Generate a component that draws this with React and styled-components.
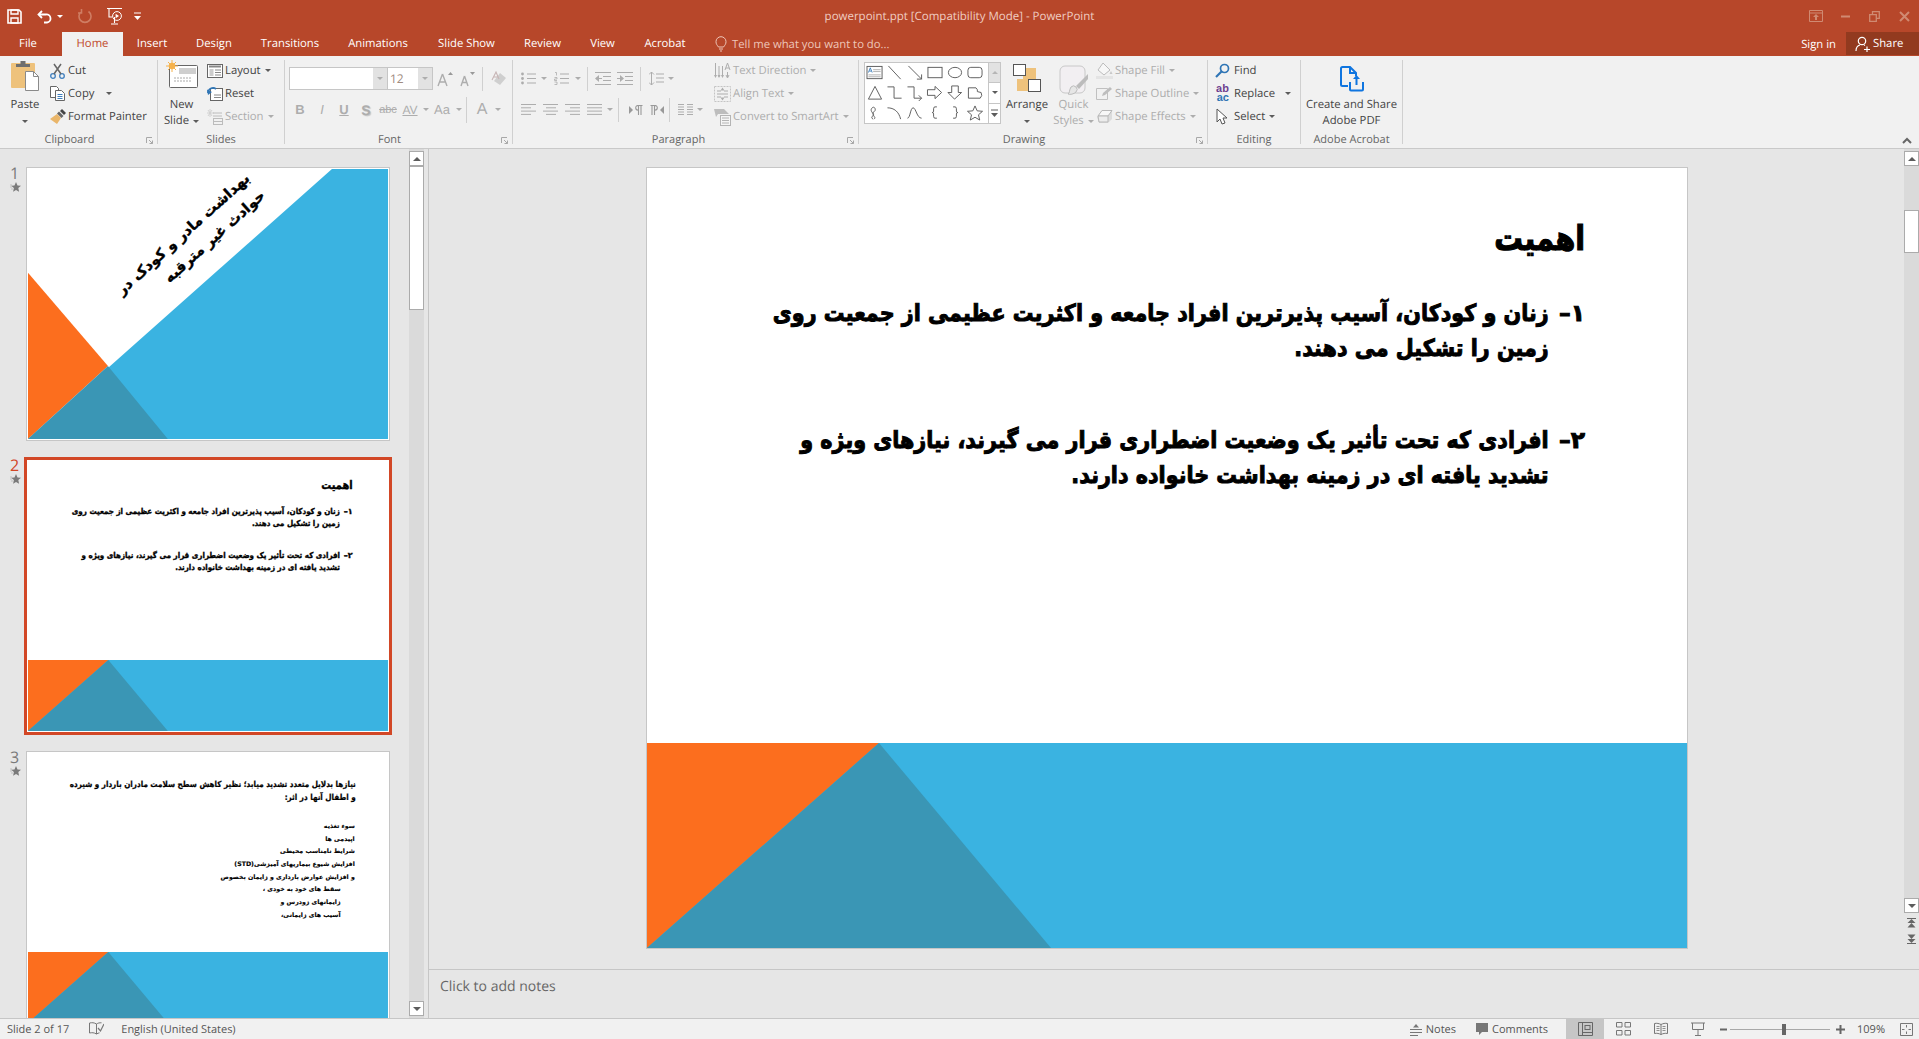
import React from "react";
import styled, { createGlobalStyle } from "styled-components";

const UI_FONT = `"Open Sans", "Noto Sans", sans-serif`;
const SLIDE_FONT = `"DejaVu Sans", "Noto Sans", sans-serif`;
const DIM = "#adadad";
const INK = "#5c5c5c";

const GlobalStyle = createGlobalStyle`
  html, body { margin: 0; padding: 0; background: #e6e6e6; }
  body { font-family: ${UI_FONT}; font-size: 11.3px; color: #444; text-rendering: geometricPrecision; }
  * { box-sizing: border-box; }
`;

const Page = styled.div`
  height: 100vh;
  display: flex;
  flex-direction: column;
  overflow: hidden;
`;

/* ---------- title bar ---------- */
const TitleBar = styled.div`
  height: 32px;
  flex: none;
  background: #b7472a;
  display: grid;
  grid-template-columns: 1fr auto 1fr;
  align-items: center;
`;
const QuickAccess = styled.div`
  display: flex;
  align-items: center;
  padding-left: 5px;
`;
const DocTitle = styled.div`
  color: #f0cdc2;
  font-size: 11.5px;
`;
const WindowButtons = styled.div`
  display: flex;
  justify-content: flex-end;
  align-items: center;
`;
const WinButton = styled.span`
  width: 29.5px;
  display: flex;
  justify-content: center;
`;
const Slot = styled.span`
  width: ${(p) => p.$w}px;
  height: 23px;
  flex: none;
  display: flex;
  align-items: center;
  justify-content: center;
`;
const Glyph = styled.svg`
  display: block;
  flex: none;
`;
const Caret = styled.span`
  display: inline-block;
  flex: none;
  width: 0;
  height: 0;
  border-left: 3px solid transparent;
  border-right: 3px solid transparent;
  border-top: 3px solid ${(p) => p.$color || INK};
  margin-left: ${(p) => p.$ml || 0}px;
`;

/* ---------- tabs ---------- */
const TabRow = styled.div`
  height: 24px;
  flex: none;
  background: #b7472a;
  display: flex;
  align-items: stretch;
`;
const Tab = styled.div`
  width: ${(p) => p.$w}px;
  padding-right: ${(p) => p.$pr || 0}px;
  padding-bottom: 1px;
  display: flex;
  align-items: center;
  justify-content: center;
  color: ${(p) => (p.$active ? "#c0482a" : "#fff")};
  background: ${(p) => (p.$active ? "#f1f1f1" : "transparent")};
`;
const TellMe = styled.div`
  margin-left: 15px;
  display: flex;
  align-items: center;
  gap: 5px;
  color: #eec6b9;
`;
const TabEnd = styled.div`
  margin-left: auto;
  display: flex;
  align-items: stretch;
`;
const SignIn = styled.div`
  display: flex;
  align-items: center;
  color: #fff;
  padding-right: 10px;
`;
const Share = styled.div`
  width: 73px;
  margin-bottom: 1px;
  background: #923a1f;
  color: #fff;
  display: flex;
  align-items: center;
  gap: 3px;
  padding-left: 9px;
`;

/* ---------- ribbon ---------- */
const Ribbon = styled.div`
  height: 93px;
  flex: none;
  position: relative;
  background: #f1f1f1;
  border-bottom: 1px solid #c9c9c9;
  padding-top: 4px;
  display: flex;
  align-items: flex-start;
`;
const Group = styled.div`
  width: ${(p) => p.$w}px;
  height: 84px;
  flex: none;
  border-right: 1px solid #d0d0d0;
  display: flex;
  flex-direction: column;
  position: relative;
`;
const GroupBody = styled.div`
  height: 72px;
  display: flex;
  align-items: flex-start;
  padding-left: ${(p) => p.$pl || 0}px;
`;
const GroupLabel = styled.div`
  height: 12px;
  line-height: 16px;
  text-align: center;
  color: #666;
  font-size: 11px;
  padding-right: ${(p) => p.$pr || 0}px;
`;
const Launcher = styled.span`
  position: absolute;
  right: 4px;
  bottom: 0;
`;
const Collapse = styled.span`
  position: absolute;
  right: 7px;
  bottom: 4px;
`;
const BigButton = styled.div`
  width: ${(p) => p.$w}px;
  flex: none;
  display: flex;
  flex-direction: column;
  align-items: center;
  color: ${(p) => (p.$dim ? DIM : "#444")};
`;
const BigIcon = styled.div`
  height: 37px;
  padding-top: ${(p) => p.$top || 0}px;
  display: flex;
  align-items: flex-start;
  justify-content: center;
`;
const BigText = styled.div`
  height: 16px;
  line-height: 16px;
  white-space: nowrap;
  display: flex;
  align-items: center;
  gap: 4px;
`;
const SmallColumn = styled.div`
  display: flex;
  flex-direction: column;
  margin-top: -1px;
  margin-left: ${(p) => p.$ml || 0}px;
`;
const SmallButton = styled.div`
  height: 23px;
  display: flex;
  align-items: center;
  white-space: nowrap;
  color: ${(p) => (p.$dim ? DIM : "#444")};
`;
const SmallIcon = styled.span`
  width: ${(p) => p.$w}px;
  flex: none;
  margin-right: ${(p) => p.$gap ?? 3}px;
  display: flex;
  justify-content: center;
`;
const ToolColumn = styled.div`
  padding-top: 7px;
  width: ${(p) => (p.$w ? `${p.$w}px` : "auto")};
  flex: none;
  display: flex;
  flex-direction: column;
  gap: 8px;
`;
const ToolRow = styled.div`
  height: 23px;
  display: flex;
  align-items: center;
`;
const ComboBox = styled.div`
  width: ${(p) => p.$w}px;
  height: 23px;
  border: 1px solid #c6c6c6;
  margin-left: ${(p) => p.$ml || 0}px;
  background: #fff;
  display: flex;
  font-size: 12px;
  color: #a08b80;
`;
const ComboValue = styled.div`
  flex: 1;
  line-height: 21px;
  padding-left: 2px;
`;
const ComboArrow = styled.div`
  width: 14px;
  background: #e2e2e2;
  display: flex;
  align-items: center;
  justify-content: center;
`;
const VRule = styled.span`
  width: 1px;
  height: ${(p) => p.$h || 23}px;
  flex: none;
  background: #d0d0d0;
  margin: 0 ${(p) => p.$m || 4}px;
`;
const FontGlyph = styled.span`
  font-family: "Liberation Sans", sans-serif;
  font-size: ${(p) => p.$size || 13}px;
  font-weight: ${(p) => (p.$bold ? 700 : 400)};
  font-style: ${(p) => (p.$italic ? "italic" : "normal")};
  text-decoration: ${(p) => p.$deco || "none"};
  text-shadow: ${(p) => (p.$shadow ? "1px 1px 1px #c4c4c4" : "none")};
  color: ${DIM};
  white-space: nowrap;
`;
const Gallery = styled.div`
  width: 137px;
  height: 62px;
  margin-top: 2px;
  flex: none;
  background: #fff;
  border: 1px solid #c6c6c6;
  display: flex;
`;
const ShapeGrid = styled.div`
  width: 123px;
  display: grid;
  grid-template-columns: repeat(6, 20px);
  grid-auto-rows: 20px;
  align-items: center;
  justify-items: center;
`;
const Spinner = styled.div`
  flex: 1;
  border-left: 1px solid #c6c6c6;
  display: flex;
  flex-direction: column;
`;
const SpinCell = styled.div`
  flex: 1;
  display: flex;
  align-items: center;
  justify-content: center;
  background: ${(p) => (p.$off ? "#e2e2e2" : "#fff")};
  & + & {
    border-top: 1px solid #c6c6c6;
  }
`;
const UpTriangle = styled.span`
  width: 0;
  height: 0;
  border-left: ${(p) => p.$s || 3}px solid transparent;
  border-right: ${(p) => p.$s || 3}px solid transparent;
  border-bottom: ${(p) => p.$s || 3}px solid ${(p) => p.$color || INK};
`;
const AbText = styled.span`
  font-family: "Liberation Sans", sans-serif;
  font-size: 11px;
  line-height: 9px;
  font-weight: 700;
  display: block;
  color: ${(p) => p.$color};
`;
const AbStack = styled.span`
  display: flex;
  flex-direction: column;
  align-items: flex-end;
`;

/* ---------- workspace ---------- */
const Workspace = styled.div`
  flex: 1;
  min-height: 0;
  display: flex;
`;
const LeftPane = styled.div`
  width: 429px;
  flex: none;
  display: flex;
  border-right: 1px solid #c6c6c6;
`;
const ThumbList = styled.div`
  width: 409px;
  flex: none;
  overflow: hidden;
  padding-top: 16px;
  display: flex;
  flex-direction: column;
  gap: 14px;
`;
const ThumbRow = styled.div`
  display: flex;
  height: 278px;
  flex: none;
`;
const ThumbMeta = styled.div`
  width: 24px;
  flex: none;
  padding: 0 0 0 10px;
  display: flex;
  flex-direction: column;
  align-items: flex-start;
`;
const ThumbNumber = styled.div`
  font-size: 16px;
  line-height: 18px;
  margin-top: -1px;
  color: ${(p) => (p.$active ? "#d24726" : "#7a7a7a")};
`;
const ThumbFrame = styled.div`
  width: ${(p) => (p.$active ? 368 : 364)}px;
  height: ${(p) => (p.$active ? 278 : 274)}px;
  margin: ${(p) => (p.$active ? "0" : "2px")};
  padding: 1px;
  border: ${(p) => (p.$active ? "3px solid #d24726" : "1px solid #c6c6c6")};
  background: #fff;
  flex: none;
`;
const ThumbScale = styled.div`
  zoom: 0.34615;
  width: 1040px;
  height: 780px;
`;
const ScrollBar = styled.div`
  width: 15px;
  flex: none;
  background: #dadada;
  display: flex;
  flex-direction: column;
  align-items: stretch;
  padding-top: 2px;
`;
const ScrollButton = styled.div`
  height: 15px;
  flex: none;
  background: #fff;
  border: 1px solid #ababab;
  display: flex;
  align-items: center;
  justify-content: center;
`;
const ScrollThumb = styled.div`
  height: ${(p) => p.$h}px;
  margin-top: ${(p) => p.$mt}px;
  flex: none;
  background: #fff;
  border: 1px solid #ababab;
`;
const ScrollGap = styled.div`
  flex: 1;
`;
const DownTriangle = styled.span`
  width: 0;
  height: 0;
  border-left: 4px solid transparent;
  border-right: 4px solid transparent;
  border-top: 4px solid ${INK};
`;
const Editor = styled.div`
  flex: 1;
  min-width: 0;
  display: flex;
  flex-direction: column;
`;
const StageRow = styled.div`
  height: 821px;
  flex: none;
  display: flex;
  border-bottom: 1px solid #c6c6c6;
`;
const Stage = styled.div`
  flex: 1;
  padding: 18px 0 0 217px;
`;
const SideColumn = styled.div`
  width: 15px;
  flex: none;
  display: flex;
  flex-direction: column;
`;
const SideTrack = styled(ScrollBar)`
  height: 764px;
  flex: none;
`;
const PageJump = styled.div`
  flex: 1;
  display: flex;
  flex-direction: column;
  align-items: center;
  gap: 6px;
  padding-top: 5px;
`;
const Notes = styled.div`
  flex: 1;
  padding: 7px 0 0 11px;
  font-size: 14px;
  color: #666;
`;

/* ---------- slide ---------- */
const SlideBorder = styled.div`
  width: 1042px;
  height: 782px;
  border: 1px solid #c6c6c6;
  background: #fff;
`;
const Slide = styled.div`
  width: 1040px;
  height: 780px;
  background: #fff;
  position: relative;
  display: flex;
  flex-direction: column;
  overflow: hidden;
  font-family: ${SLIDE_FONT};
  color: #000;
`;
const SlideText = styled.div`
  flex: 1;
  padding-top: ${(p) => p.$top}px;
  padding-right: ${(p) => p.$right}px;
  direction: rtl;
`;
/* the slide typeface is a narrow heavy one, so the wider DejaVu is pulled in */
const Narrow = styled.div`
  transform: scaleX(${(p) => p.$x});
  transform-origin: right center;
`;
const SlideTitle = styled(Narrow)`
  font-size: 34px;
  line-height: 42px;
  font-weight: 700;
  -webkit-text-stroke: 1.2px #000;
  margin-bottom: 36px;
`;
const Point = styled.div`
  display: flex;
  margin-bottom: 57px;
  font-size: 23.4px;
  line-height: 35px;
  font-weight: 700;
  -webkit-text-stroke: 1px #000;
`;
const PointNumber = styled.div`
  width: 36px;
  flex: none;
  white-space: nowrap;
`;
const Line = styled.div`
  white-space: nowrap;
`;
const Band = styled.svg`
  display: block;
  flex: none;
  width: 1040px;
  height: 205px;
`;
const FullArt = styled.svg`
  position: absolute;
  inset: 0;
  width: 1040px;
  height: 780px;
`;
const RotatedTitle = styled.div`
  position: absolute;
  left: 196px;
  top: 159px;
  width: 530px;
  text-align: right;
  direction: rtl;
  font-size: 42px;
  line-height: 66px;
  font-weight: 700;
  -webkit-text-stroke: 1px #000;
  transform: rotate(-42deg);
`;
const NeedsHead = styled(Narrow)`
  font-size: 24px;
  line-height: 38px;
  font-weight: 700;
  -webkit-text-stroke: 0.7px #000;
  margin-bottom: 47px;
`;
const NeedsItem = styled.div`
  font-size: 18px;
  line-height: 36.6px;
  font-weight: 700;
  white-space: nowrap;
  -webkit-text-stroke: 0.4px #000;
  padding-right: ${(p) => (p.$indent ? 44 : 3)}px;
`;

/* ---------- status bar ---------- */
const StatusBar = styled.div`
  height: 21px;
  flex: none;
  background: #f1f1f1;
  border-top: 1px solid #c6c6c6;
  display: flex;
  align-items: stretch;
  font-size: 11px;
  color: #555;
`;
const StatusItem = styled.div`
  display: flex;
  align-items: center;
  gap: 4px;
  white-space: nowrap;
  margin-left: ${(p) => p.$ml || 0}px;
  width: ${(p) => (p.$w ? `${p.$w}px` : "auto")};
  justify-content: ${(p) => (p.$center ? "center" : "flex-start")};
  background: ${(p) => (p.$on ? "#c6c6c6" : "transparent")};
`;
const StatusRight = styled.div`
  margin-left: auto;
  display: flex;
  align-items: stretch;
`;
const ZoomTrack = styled.div`
  width: 100px;
  height: 1px;
  align-self: center;
  margin: 0 3px;
  background: #a8a8a8;
  position: relative;
`;
const ZoomHandle = styled.span`
  position: absolute;
  left: 52px;
  top: -5px;
  width: 4px;
  height: 11px;
  background: #666;
`;

/* ---------- icons ---------- */
const Ico = ({ w, h, vw, vh, children }) => (
  <Glyph width={w} height={h} viewBox={`0 0 ${vw || w} ${vh || h}`} fill="none">
    {children}
  </Glyph>
);

const SaveIcon = () => (
  <Ico w={15} h={15}>
    <path d="M1 1h11l2 2v11H1z" stroke="#fff" strokeWidth="1.6" />
    <path d="M4 1h7v4H4zM4 9h7v5H4z" stroke="#fff" strokeWidth="1.4" />
  </Ico>
);
const UndoIcon = () => (
  <Ico w={16} h={15}>
    <path d="M5 2 1.5 5.5 5 9" stroke="#fff" strokeWidth="1.8" />
    <path d="M2 5.5h7a4 4 0 0 1 1 8H7" stroke="#fff" strokeWidth="1.8" />
  </Ico>
);
const RedoIcon = () => (
  <Ico w={14} h={16}>
    <path d="M3.5 3.5a6 6 0 1 0 7 0M3.5 1v4H0" stroke="#cf7d63" strokeWidth="1.6" />
  </Ico>
);
const PresentIcon = () => (
  <Ico w={17} h={18}>
    <path d="M1 1.5h15M3 2v8h3M8.5 10v6M5 17h7" stroke="#fff" strokeWidth="1.1" />
    <circle cx="11" cy="9" r="4.4" stroke="#fff" />
    <path d="M9.6 6.8 13 9l-3.4 2.2z" fill="#fff" />
  </Ico>
);
const CustomizeIcon = () => (
  <Ico w={7} h={8}>
    <path d="M0 1h7" stroke="#fff" />
    <path d="M0 4h7L3.5 8z" fill="#fff" />
  </Ico>
);
const RestoreRibbon = () => (
  <Ico w={14} h={12}>
    <path d="M.5.5h13v11H.5zM.5 3h13" stroke="#d08a72" />
    <path d="M7 4 4 7h2v3h2V7h2z" fill="#d08a72" />
  </Ico>
);
const MinimizeIcon = () => (
  <Ico w={9} h={3}>
    <path d="M0 1.5h9" stroke="#d08a72" strokeWidth="2" />
  </Ico>
);
const RestoreIcon = () => (
  <Ico w={11} h={11}>
    <path d="M.7 3.7h6.6v6.6H.7zM3.5 3.5V.7h6.800v6.600H7.500" stroke="#d08a72" strokeWidth="1.3" />
  </Ico>
);
const CloseIcon = () => (
  <Ico w={11} h={11}>
    <path d="M1 1l9 9M10 1l-9 9" stroke="#d08a72" strokeWidth="2" />
  </Ico>
);
const BulbIcon = () => (
  <Ico w={12} h={16}>
    <path d="M3.5 11C2 9 1 8 1 5.7a5 5 0 0 1 10 0C11 8 10 9 8.5 11zM4 13h4M5 15h2" stroke="#eec6b9" />
  </Ico>
);
const ShareIcon = () => (
  <Ico w={15} h={16}>
    <circle cx="7" cy="5" r="3.7" stroke="#fff" strokeWidth="1.2" />
    <path d="M1 15c0-3.500 2-5.500 4-6M9 9l1 .5M9 13.500h6M12 10.500v5.500" stroke="#fff" strokeWidth="1.2" />
  </Ico>
);
const PasteIcon = () => (
  <Ico w={28} h={31}>
    <rect y="3" width="24" height="25" rx="1" fill="#eec27c" />
    <path d="M5 7V4h4.500V1h5v3H19v3z" fill="#6f6f6f" />
    <path d="M14.500 11.500h8l5 5V30.500h-13z" fill="#fff" stroke="#8a8a8a" />
    <path d="M22.500 11.500v5h5" stroke="#8a8a8a" />
  </Ico>
);
const CutIcon = () => (
  <Ico w={15} h={16}>
    <circle cx="3" cy="13" r="2.3" stroke="#3f7fbe" strokeWidth="1.3" />
    <circle cx="12" cy="13" r="2.3" stroke="#3f7fbe" strokeWidth="1.3" />
    <path d="M4 11 11 1M11 11 4 1" stroke="#666" strokeWidth="1.5" />
  </Ico>
);
const CopyIcon = () => (
  <Ico w={15} h={15}>
    <path d="M.5.5h6l2 2v9H.5z" fill="#fff" stroke="#666" />
    <path d="M5.500 4.500h6l3 3v7h-9z" fill="#fff" stroke="#666" />
    <path d="M7.500 8.500h5M7.500 10.500h5M7.500 12.500h5" stroke="#3f7fbe" />
  </Ico>
);
const PainterIcon = () => (
  <Ico w={16} h={16}>
    <path d="M7 5 11 9 7 15 0 10z" fill="#eab66a" />
    <path d="M7 4.500 11.500 9l2-2L9 2.500z" fill="#666" />
    <path d="M10 2l2-2 4 4-2 2z" fill="#444" />
  </Ico>
);
const NewSlideIcon = () => (
  <Ico w={32} h={28}>
    <rect x="3.5" y="5.5" width="28" height="22" rx="1" fill="#fff" stroke="#666" />
    <path d="M13 8h17v6H13z" fill="#cfcfcf" />
    <path d="M8 18h18M8 21h18" stroke="#aaa" strokeDasharray="2 1" />
    <circle cx="6" cy="6" r="3.2" fill="#f6b24a" />
    <path d="M6 0v12M0 6h12M2 2l8 8M10 2l-8 8" stroke="#f6b24a" />
  </Ico>
);
const LayoutIcon = () => (
  <Ico w={16} h={14}>
    <rect x=".5" y=".5" width="15" height="13" fill="#fff" stroke="#666" />
    <path d="M2 2.500h12" stroke="#888" strokeWidth="2" />
    <path d="M2.500 5h4v7h-4z" fill="#ccc" />
    <path d="M8 6h6M8 8.500h6M8 11h6" stroke="#888" />
  </Ico>
);
const ResetIcon = () => (
  <Ico w={16} h={15}>
    <rect x="3.5" y="2.5" width="12" height="12" fill="#fff" stroke="#666" />
    <path d="M7 9h7M7 11.500h7" stroke="#888" />
    <path d="M1 7a5 5 0 0 1 8-4" stroke="#2f75b5" strokeWidth="1.8" />
    <path d="M0 3.500 1 9l4-3z" fill="#2f75b5" />
  </Ico>
);
const SectionIcon = () => (
  <Ico w={16} h={16}>
    <path d="M3 0v8M0 4h7M1 1l4 6M5 1 1 7" stroke="#d2d2d2" />
    <path d="M6 4h9M6 7h9" stroke="#bcbcbc" />
    <rect x="6.5" y="9.5" width="9" height="6" stroke="#bcbcbc" />
    <path d="M6 12.500h10" stroke="#bcbcbc" />
  </Ico>
);
const GrowIcon = ({ small }) => (
  <Ico w={small ? 15 : 17} h={16}>
    <path d={small ? "M4.500 5 1 15M4.500 5 8 15M2.500 11.500h4" : "M5.500 3 1 15M5.500 3 10 15M3 11h5"} stroke={DIM} strokeWidth="1.4" />
    <path d={small ? "M10 1h5l-2.500 3z" : "M11 4h5l-2.500-3z"} fill="#999" />
  </Ico>
);
const ClearIcon = () => (
  <Ico w={16} h={16}>
    <path d="M9 2 15 7 9 14 3 10z" fill="#cfcfcf" />
    <path d="M1 9 5 1l3 7M2.500 6h4" stroke="#c7b5b5" strokeWidth="1.1" />
  </Ico>
);
const ListLines = ({ x = 5, w = 9, rows = [2, 6.5, 11] }) =>
  rows.map((y) => <path key={y} d={`M${x} ${y}h${w}`} stroke={DIM} />);
const BulletsIcon = () => (
  <Ico w={15} h={13}>
    <circle cx="1.5" cy="2" r="1.4" fill={DIM} />
    <circle cx="1.5" cy="6.5" r="1.4" fill={DIM} />
    <circle cx="1.5" cy="11" r="1.4" fill={DIM} />
    <ListLines x={6} />
  </Ico>
);
const NumbersIcon = () => (
  <Ico w={15} h={13}>
    <path d="M1 .5h1.500v3M.5 5.500h2.500v1.500H.5v1.500H3M.5 10h2.500v2.500H.5" stroke={DIM} strokeWidth=".8" />
    <ListLines x={6} />
  </Ico>
);
const IndentIcon = ({ inc }) => (
  <Ico w={16} h={13}>
    <path d="M0 .5h16M8 4.500h8M8 8.500h8M0 12.500h16" stroke={DIM} />
    <path d={inc ? "M0 6.500h3" : "M3 6.500h4"} stroke={DIM} />
    <path d={inc ? "M3 3l4 3.500L3 10z" : "M4 3 0 6.500 4 10z"} fill={DIM} />
  </Ico>
);
const SpacingIcon = () => (
  <Ico w={15} h={15}>
    <path d="M2.500 1v13M0 3.500 2.500 1 5 3.500M0 11.500 2.500 14 5 11.500" stroke={DIM} />
    <path d="M7 3h8M7 7h8M7 11h8" stroke={DIM} />
  </Ico>
);
const TextDirIcon = () => (
  <Ico w={17} h={17}>
    <path d="M1.500 1v14M5 4v11M8.500 4v11" stroke={DIM} />
    <path d="M0 13l1.500 3L3 13M3.500 13 5 16l1.500-3M7 13l1.500 3 1.500-3" fill={DIM} />
    <path d="M11 8l2.500-7L16 8M12 6h3" stroke={DIM} />
    <path d="M13.500 10v5M12 13l1.500 3 1.500-3" stroke={DIM} />
  </Ico>
);
const AlignTextIcon = () => (
  <Ico w={17} h={16}>
    <path d="M.5.5h16v15H.5z" stroke="#c4c4c4" strokeDasharray="2 1" />
    <path d="M3 8h11M3 11h4M10 11h4M3 5h4M10 5h4" stroke={DIM} />
    <path d="M8.500 1.500 6.500 4.500h4zM8.500 14.500l-2-3h4z" fill={DIM} />
  </Ico>
);
const SmartArtIcon = () => (
  <Ico w={17} h={18}>
    <path d="M0 1h10l5 5H4L2 9z" fill="#bdbdbd" />
    <rect x="6.5" y="7.5" width="10" height="10" fill="#f5f5f5" stroke="#b4b4b4" />
    <path d="M8 10h7M8 12.500h7M8 15h7" stroke="#b4b4b4" />
  </Ico>
);
const AlignIcon = ({ mode }) => {
  const rows = [
    [0, 15], [mode === "center" ? 3 : mode === "right" ? 5 : 0, mode === "justify" ? 15 : 10],
    [0, 15], [mode === "center" ? 3 : mode === "right" ? 5 : 0, mode === "justify" ? 15 : 10],
  ];
  return (
    <Ico w={15} h={11}>
      {rows.map(([x, w], i) => (
        <path key={i} d={`M${x} ${i * 3.3 + 0.5}h${w}`} stroke={DIM} />
      ))}
    </Ico>
  );
};
const ParaDirIcon = ({ rtl }) => (
  <Ico w={14} h={10}>
    <g transform={rtl ? "matrix(-1 0 0 1 14 0)" : undefined}>
      <path d="M0 1l4 4-4 4z" fill="#999" />
      <path d="M8 .5h5.500M9 .5a2.200 2.200 0 0 0 0 4.600M9.500 0v10M12 0v10" stroke="#999" strokeWidth="1.1" />
    </g>
  </Ico>
);
const ColumnsIcon = () => (
  <Ico w={15} h={11}>
    <path d="M0 .5h6M9 .5h6M0 5.500h6M9 5.500h6M0 10.500h6M9 10.500h6M0 3h6M9 3h6M0 8h6M9 8h6" stroke={DIM} />
  </Ico>
);
const GS = "#5a5a5a";
const SHAPES = [
  <>
    <rect x=".5" y="1.5" width="16" height="13" stroke={GS} />
    <path d="M7 7h8M7 5h8M2 10.500h13M2 12.500h13" stroke="#999" strokeWidth=".8" />
    <path d="M2 8l2-5 2 5M3 6.500h2" stroke="#2f75b5" strokeWidth=".9" />
  </>,
  <path d="M2 1l13 14" stroke={GS} />,
  <path d="M2 1l14 14M16 10v5h-5" stroke={GS} />,
  <rect x="1.5" y="2.5" width="15" height="11" stroke={GS} />,
  <ellipse cx="9" cy="8" rx="7" ry="5.5" stroke={GS} />,
  <rect x="1.5" y="2.5" width="15" height="11" rx="3" stroke={GS} />,
  <path d="M9 1.500 16 15H2z" stroke={GS} />,
  <path d="M1 2h7v12h8" stroke={GS} />,
  <path d="M1 2h7v12h8M13 11l3 3-3 3" stroke={GS} />,
  <path d="M1 5h8V1.500L16 8l-7 6.500V11H1z" stroke={GS} />,
  <path d="M5.500 1h7v7H16l-7.500 7L1.500 8h4z" stroke={GS} />,
  <path d="M2 14V3h8l1.500 2v2l4 1a5 5 0 0 1-1 6z" stroke={GS} />,
  <path d="M7 15c-4-2 2-4 0-6s-3-4-1-6 4 1 3 3-3 1-2 4 3 3 1 5" stroke={GS} />,
  <path d="M1 3c7 0 12 4 14 12" stroke={GS} />,
  <path d="M1 14c3 0 3-11 6-11s4 11 9 11" stroke={GS} />,
  <path d="M11 2H9Q7.500 2 7.500 4V6.500Q7.500 8 6 8 7.500 8 7.500 9.500V12Q7.500 14 9 14h2" stroke={GS} />,
  <path d="M7 2h2q1.500 0 1.500 2v2.500Q10.500 8 12 8 10.500 8 10.500 9.500V12Q10.500 14 9 14H7" stroke={GS} />,
  <path d="M9 1l2.300 5.200 5.700.5-4.300 3.700 1.300 5.600L9 13l-5 3 1.300-5.600L1 6.700l5.700-.5z" stroke={GS} />,
];
const ArrangeIcon = () => (
  <Ico w={28} h={28}>
    <path d="M10 4h13v12H10zM4 15h13v12H4z" fill="#eec27c" />
    <rect x=".5" y=".5" width="12" height="11" fill="#fff" stroke="#555" />
    <rect x="15.5" y="15.5" width="12" height="12" fill="#fff" stroke="#555" />
  </Ico>
);
const QuickStylesIcon = () => (
  <Ico w={29} h={30}>
    <rect x="1" y="1" width="25" height="27" rx="5" fill="#f2eff2" stroke="#c8c8c8" />
    <path d="M29 9 17 21l3 3 9-10z" fill="#bcbcbc" />
    <path d="M12 22a3.500 3.500 0 1 1 5 5c-2 2-6 3-8 2 2-1 1-4 3-7z" fill="#e6e6e6" stroke="#bcbcbc" />
  </Ico>
);
const FillIcon = () => (
  <Ico w={17} h={17}>
    <path d="M7 1 14 8 8 13 2 8z" stroke="#bcbcbc" fill="#f7f7f7" />
    <path d="M15 9l1.500 3h-3z" fill="#c8c8c8" />
    <path d="M0 14h17v3H0z" fill="#e4e4e4" />
  </Ico>
);
const OutlineIcon = () => (
  <Ico w={17} h={15}>
    <path d="M.5 2.500h11v11H.5z" stroke="#c0c0c0" />
    <path d="M6 10l1-3 7-6 2 2-7 6z" fill="#bdbdbd" />
  </Ico>
);
const EffectsIcon = () => (
  <Ico w={17} h={15}>
    <path d="M1 8 6 1h10v9l-4 4H3z" fill="#dcdcdc" />
    <path d="M2 7 6 1.500h10L12 7z" fill="#f7f7f7" stroke="#b8b8b8" />
    <path d="M2 7h10v6H3z" fill="#ececec" stroke="#b8b8b8" />
  </Ico>
);
const FindIcon = () => (
  <Ico w={15} h={15}>
    <circle cx="9.500" cy="5.500" r="4" stroke="#2f75b5" strokeWidth="1.7" />
    <path d="M6.500 8.500 1 14" stroke="#2f75b5" strokeWidth="2.2" />
  </Ico>
);
const SelectIcon = () => (
  <Ico w={13} h={18}>
    <path d="M1 1v13l3-3 2 5 3-1-2-5h4z" fill="#fff" stroke="#555" />
  </Ico>
);
const AdobeIcon = () => (
  <Ico w={24} h={26}>
    <path d="M8 20H2.500A1.500 1.500 0 0 1 1 18.500V2.500A1.500 1.500 0 0 1 2.500 1H10l6 6v3" stroke="#0f75e0" strokeWidth="2" />
    <path d="M10 1v6h6" stroke="#0f75e0" strokeWidth="2" />
    <path d="M10 16v7.500a1 1 0 0 0 1 1h11a1 1 0 0 0 1-1V16" stroke="#0f75e0" strokeWidth="2" />
    <path d="M16.500 9 13 13h2.500v6h2v-6H20z" fill="#0f75e0" />
  </Ico>
);
const LauncherIcon = () => (
  <Ico w={7} h={7}>
    <path d="M.5 6V.5H6" stroke="#a8a8a8" />
    <path d="M3 3l3.500 3.500M6.500 3.500v3h-3" stroke="#a8a8a8" />
  </Ico>
);
const ChevronUp = () => (
  <Ico w={10} h={7}>
    <path d="M1 6l4-4 4 4" stroke="#666" strokeWidth="2" />
  </Ico>
);
const StarIcon = () => (
  <Ico w={11} h={10}>
    <path d="M6 0l1.500 3.500 3.500.3-2.700 2.300.8 3.600L6 8 3.100 9.700l.8-3.600L1.200 3.800l3.300-.3z" fill="#7a7a7a" />
    <path d="M0 3h2M0 5h2M1 7h2" stroke="#aaa" strokeWidth=".6" />
  </Ico>
);
const JumpIcon = ({ down }) => (
  <Ico w={9} h={10}>
    <g transform={down ? "matrix(1 0 0 -1 0 10)" : undefined}>
      <path d="M0 .5h9" stroke="#666" />
      <path d="M4.500 1 8.500 5h-8zM4.500 5 8.500 9.500h-8z" fill="#666" />
    </g>
  </Ico>
);
const SpellIcon = () => (
  <Ico w={15} h={14}>
    <path d="M7.500 2C5 .5 3 .5.500 1v10c2.500-.5 4.500-.5 7 1 1-.6 2-1 3-1.200M7.500 2v10M7.500 2c1.500-1 3-1.300 5-1.200" stroke="#777" />
    <path d="M9 6l2.500 3L15 2" stroke="#777" strokeWidth="1.200" />
  </Ico>
);
const NotesIcon = () => (
  <Ico w={12} h={13}>
    <path d="M0 6.500h12M0 9.500h12M0 12.500h8" stroke="#777" />
    <path d="M6 1 3 4.500h6z" fill="#777" />
  </Ico>
);
const CommentIcon = () => (
  <Ico w={12} h={13}>
    <path d="M0 0h12v9H6l-3 3V9H0z" fill="#777" />
  </Ico>
);
const NormalViewIcon = () => (
  <Ico w={15} h={14}>
    <path d="M.5.5h14v13H.5zM4.500.5v13M4.500 10.500h10" stroke="#666" />
    <rect x="7" y="3.500" width="5" height="4" stroke="#666" />
  </Ico>
);
const SorterIcon = () => (
  <Ico w={15} h={14}>
    <path d="M.5.5h5.500v4.500H.5zM9 .5h5.500v4.500H9zM.5 8.500h5.500V13H.5zM9 8.500h5.500V13H9z" stroke="#777" />
  </Ico>
);
const ReadingIcon = () => (
  <Ico w={14} h={14}>
    <path d="M.5 1.500c2.500-.5 4.500 0 6.500 1 2-1 4-1.500 6.500-1v10c-2.500-.5-4.500 0-6.500 1-2-1-4-1.500-6.500-1zM7 2.500v10" stroke="#777" />
    <path d="M2.500 4.500h3M2.500 6.500h3M2.500 8.500h3M8.500 4.500h3M8.500 6.500h3M8.500 8.500h3" stroke="#777" strokeWidth=".8" />
  </Ico>
);
const ShowIcon = () => (
  <Ico w={14} h={14}>
    <path d="M0 1h14M1.500 1v6.500h11V1M7 7.500V13M4 13.500h6" stroke="#777" />
  </Ico>
);
const FitIcon = () => (
  <Ico w={13} h={13}>
    <path d="M.5.5h12v12H.5z" stroke="#777" />
    <path d="M6.500 2v2.500M6.500 8.500V11M2 6.500h2.500M8.500 6.500H11" stroke="#777" />
  </Ico>
);

/* ---------- slide contents ---------- */
const BAND_ORANGE = "#fc6e1e";
const BAND_BLUE = "#3ab3e1";
const BAND_DARK = "#3a96b5";

const FooterBand = () => (
  <Band viewBox="0 0 1040 205">
    <rect width="1040" height="205" fill={BAND_BLUE} />
    <path d="M0 0h232L0 205z" fill={BAND_ORANGE} />
    <path d="M0 205 232 0l172 205z" fill={BAND_DARK} />
  </Band>
);

const CoverSlide = () => (
  <Slide>
    <FullArt viewBox="0 0 1040 780">
      <path d="M878 0h162v780H0z" fill={BAND_BLUE} />
      <path d="M0 300 231 569 0 780z" fill={BAND_ORANGE} />
      <path d="M0 780 231 569l173 211z" fill={BAND_DARK} />
    </FullArt>
    <RotatedTitle>
      <Line>بهداشت مادر و کودک در</Line>
      <Line>حوادث غیر مترقبه</Line>
    </RotatedTitle>
  </Slide>
);

const ImportanceSlide = () => (
  <Slide>
    <SlideText $top={50} $right={102}>
      <SlideTitle $x={0.84}>اهمیت</SlideTitle>
      <Point>
        <PointNumber>۱–</PointNumber>
        <Narrow $x={0.885}>
          <Line>زنان و کودکان، آسیب پذیرترین افراد جامعه و اکثریت عظیمی از جمعیت روی</Line>
          <Line>زمین را تشکیل می دهند.</Line>
        </Narrow>
      </Point>
      <Point>
        <PointNumber>۲–</PointNumber>
        <Narrow $x={0.885}>
          <Line>افرادی که تحت تأثیر یک وضعیت اضطراری قرار می گیرند، نیازهای ویژه و</Line>
          <Line>تشدید یافته ای در زمینه بهداشت خانواده دارند.</Line>
        </Narrow>
      </Point>
    </SlideText>
    <FooterBand />
  </Slide>
);

const NeedsSlide = () => (
  <Slide>
    <SlideText $top={73} $right={93}>
      <NeedsHead $x={0.87}>
        <Line>نیازها بدلایل متعدد تشدید میابد؛ نظیر کاهش سطح سلامت مادران باردار و شیرده</Line>
        <Line>و اطفال آنها در اثر:</Line>
      </NeedsHead>
      <NeedsItem>سوء تغذیه</NeedsItem>
      <NeedsItem>اپیدمی ها</NeedsItem>
      <NeedsItem>شرایط نامناسب محیطی</NeedsItem>
      <NeedsItem>افزایش شیوع بیماریهای آمیزشی(STD)</NeedsItem>
      <NeedsItem>و افزایش عوارض بارداری و زایمان بخصوص</NeedsItem>
      <NeedsItem $indent>سقط های خود به خودی ،</NeedsItem>
      <NeedsItem $indent>زایمانهای زودرس و</NeedsItem>
      <NeedsItem $indent>آسیب های زایمانی،</NeedsItem>
    </SlideText>
    <FooterBand />
  </Slide>
);

const THUMBS = [
  { n: 1, Content: CoverSlide },
  { n: 2, Content: ImportanceSlide, active: true },
  { n: 3, Content: NeedsSlide },
];

const TABS = [
  ["File", 62, 6], ["Home", 61], ["Insert", 58], ["Design", 66], ["Transitions", 86],
  ["Animations", 90], ["Slide Show", 87], ["Review", 65], ["View", 55], ["Acrobat", 70],
];

const Small = ({ icon, w = 15, gap, dim, caret, caretMl = 4, children }) => (
  <SmallButton $dim={dim}>
    <SmallIcon $w={w} $gap={gap}>{icon}</SmallIcon>
    {children}
    {caret && <Caret $ml={caretMl} $color={dim ? DIM : INK} />}
  </SmallButton>
);
const Tool = ({ w = 22, children }) => <Slot $w={w}>{children}</Slot>;
const DimCaret = ({ w = 10 }) => (
  <Slot $w={w}>
    <Caret $color={DIM} />
  </Slot>
);

export default function App() {
  return (
    <Page>
      <GlobalStyle />
      <TitleBar>
        <QuickAccess>
          <Slot $w={18}><SaveIcon /></Slot>
          <Slot $w={12} />
          <Slot $w={20}><UndoIcon /></Slot>
          <Slot $w={10}><Caret $color="#fff" /></Slot>
          <Slot $w={10} />
          <Slot $w={20}><RedoIcon /></Slot>
          <Slot $w={8} />
          <Slot $w={22}><PresentIcon /></Slot>
          <Slot $w={2} />
          <Slot $w={20}><CustomizeIcon /></Slot>
        </QuickAccess>
        <DocTitle>powerpoint.ppt [Compatibility Mode] - PowerPoint</DocTitle>
        <WindowButtons>
          <WinButton><RestoreRibbon /></WinButton>
          <WinButton><MinimizeIcon /></WinButton>
          <WinButton><RestoreIcon /></WinButton>
          <WinButton><CloseIcon /></WinButton>
        </WindowButtons>
      </TitleBar>

      <TabRow>
        {TABS.map(([name, w, pr]) => (
          <Tab key={name} $w={w} $pr={pr} $active={name === "Home"}>{name}</Tab>
        ))}
        <TellMe>
          <BulbIcon />
          Tell me what you want to do...
        </TellMe>
        <TabEnd>
          <SignIn>Sign in</SignIn>
          <Share>
            <ShareIcon />
            Share
          </Share>
        </TabEnd>
      </TabRow>

      <Ribbon>
        <Group $w={158}>
          <GroupBody>
            <BigButton $w={50}>
              <BigIcon><PasteIcon /></BigIcon>
              <BigText>Paste</BigText>
              <BigText><Caret /></BigText>
            </BigButton>
            <SmallColumn>
              <Small icon={<CutIcon />}>Cut</Small>
              <Small icon={<CopyIcon />} caret caretMl={12}>Copy</Small>
              <Small icon={<PainterIcon />}>Format Painter</Small>
            </SmallColumn>
          </GroupBody>
          <GroupLabel $pr={18}>Clipboard</GroupLabel>
          <Launcher><LauncherIcon /></Launcher>
        </Group>

        <Group $w={127}>
          <GroupBody>
            <BigButton $w={47}>
              <BigIcon><NewSlideIcon /></BigIcon>
              <BigText>New</BigText>
              <BigText>Slide <Caret /></BigText>
            </BigButton>
            <SmallColumn $ml={2}>
              <Small icon={<LayoutIcon />} caret>Layout</Small>
              <Small icon={<ResetIcon />}>Reset</Small>
              <Small icon={<SectionIcon />} dim caret>Section</Small>
            </SmallColumn>
          </GroupBody>
          <GroupLabel>Slides</GroupLabel>
        </Group>

        <Group $w={228}>
          <GroupBody $pl={4}>
            <ToolColumn>
              <ToolRow>
                <ComboBox $w={99}>
                  <ComboValue />
                  <ComboArrow><Caret $color={DIM} /></ComboArrow>
                </ComboBox>
                <ComboBox $w={46} $ml={-1}>
                  <ComboValue>12</ComboValue>
                  <ComboArrow><Caret $color={DIM} /></ComboArrow>
                </ComboBox>
                <Slot $w={2} />
                <Tool w={21}><GrowIcon /></Tool>
                <Tool w={22}><GrowIcon small /></Tool>
                <VRule $m={4} $h={24} />
                <Tool w={24}><ClearIcon /></Tool>
              </ToolRow>
              <ToolRow>
                <Tool><FontGlyph $bold>B</FontGlyph></Tool>
                <Tool><FontGlyph $italic>I</FontGlyph></Tool>
                <Tool><FontGlyph $bold $deco="underline">U</FontGlyph></Tool>
                <Tool><FontGlyph $bold $shadow $size={14}>S</FontGlyph></Tool>
                <Tool><FontGlyph $size={11} $deco="line-through">abc</FontGlyph></Tool>
                <Tool><FontGlyph $size={12} $deco="underline">AV</FontGlyph></Tool>
                <DimCaret w={9} />
                <Tool w={24}><FontGlyph>Aa</FontGlyph></Tool>
                <DimCaret w={9} />
                <VRule $m={3} $h={26} />
                <Tool w={24}><FontGlyph $size={16}>A</FontGlyph></Tool>
                <DimCaret w={8} />
              </ToolRow>
            </ToolColumn>
          </GroupBody>
          <GroupLabel $pr={18}>Font</GroupLabel>
          <Launcher><LauncherIcon /></Launcher>
        </Group>

        <Group $w={346}>
          <GroupBody $pl={4}>
            <ToolColumn $w={197}>
              <ToolRow>
                <Tool><BulletsIcon /></Tool>
                <DimCaret />
                <Tool w={24}><NumbersIcon /></Tool>
                <DimCaret />
                <VRule $m={4} $h={24} />
                <Tool w={22}><IndentIcon /></Tool>
                <Tool w={22}><IndentIcon inc /></Tool>
                <VRule $m={4} $h={24} />
                <Tool w={22}><SpacingIcon /></Tool>
                <DimCaret w={8} />
              </ToolRow>
              <ToolRow>
                <Tool><AlignIcon mode="left" /></Tool>
                <Tool><AlignIcon mode="center" /></Tool>
                <Tool><AlignIcon mode="right" /></Tool>
                <Tool><AlignIcon mode="justify" /></Tool>
                <DimCaret w={9} />
                <VRule $m={4} $h={24} />
                <Tool w={26}><ParaDirIcon /></Tool>
                <Tool w={16}><ParaDirIcon rtl /></Tool>
                <VRule $m={4} $h={24} />
                <Tool w={22}><ColumnsIcon /></Tool>
                <DimCaret w={8} />
              </ToolRow>
            </ToolColumn>
            <SmallColumn>
              <Small icon={<TextDirIcon />} w={17} gap={2} dim caret>Text Direction</Small>
              <Small icon={<AlignTextIcon />} w={17} gap={2} dim caret>Align Text</Small>
              <Small icon={<SmartArtIcon />} w={17} gap={2} dim caret>Convert to SmartArt</Small>
            </SmallColumn>
          </GroupBody>
          <GroupLabel $pr={14}>Paragraph</GroupLabel>
          <Launcher><LauncherIcon /></Launcher>
        </Group>

        <Group $w={349}>
          <GroupBody $pl={5}>
            <Gallery>
              <ShapeGrid>
                {SHAPES.map((shape, i) => (
                  <Ico key={i} w={18} h={16} vh={17}>{shape}</Ico>
                ))}
              </ShapeGrid>
              <Spinner>
                <SpinCell $off><UpTriangle $color="#b5b5b5" /></SpinCell>
                <SpinCell><Caret /></SpinCell>
                <SpinCell><Ico w={7} h={8}><path d="M0 1h7" stroke={INK} /><path d="M0 4h7L3.500 8z" fill={INK} /></Ico></SpinCell>
              </Spinner>
            </Gallery>
            <BigButton $w={52}>
              <BigIcon $top={4}><ArrangeIcon /></BigIcon>
              <BigText>Arrange</BigText>
              <BigText><Caret /></BigText>
            </BigButton>
            <BigButton $w={41} $dim>
              <BigIcon $top={5}><QuickStylesIcon /></BigIcon>
              <BigText>Quick</BigText>
              <BigText>Styles <Caret $color={DIM} /></BigText>
            </BigButton>
            <SmallColumn $ml={2}>
              <Small icon={<FillIcon />} w={17} gap={2} dim caret>Shape Fill</Small>
              <Small icon={<OutlineIcon />} w={17} gap={2} dim caret>Shape Outline</Small>
              <Small icon={<EffectsIcon />} w={17} gap={2} dim caret>Shape Effects</Small>
            </SmallColumn>
          </GroupBody>
          <GroupLabel $pr={18}>Drawing</GroupLabel>
          <Launcher><LauncherIcon /></Launcher>
        </Group>

        <Group $w={93}>
          <GroupBody $pl={7}>
            <SmallColumn>
              <Small icon={<FindIcon />} gap={4}>Find</Small>
              <Small
                icon={
                  <AbStack>
                    <AbText $color="#6d3f8f">ab</AbText>
                    <AbText $color="#2f75b5">ac</AbText>
                  </AbStack>
                }
                gap={4}
                caret
                caretMl={10}
              >
                Replace
              </Small>
              <Small icon={<SelectIcon />} gap={4} caret>Select</Small>
            </SmallColumn>
          </GroupBody>
          <GroupLabel>Editing</GroupLabel>
        </Group>

        <Group $w={102}>
          <GroupBody>
            <BigButton $w={101}>
              <BigIcon $top={6}><AdobeIcon /></BigIcon>
              <BigText>Create and Share</BigText>
              <BigText>Adobe PDF</BigText>
            </BigButton>
          </GroupBody>
          <GroupLabel>Adobe Acrobat</GroupLabel>
        </Group>
        <Collapse><ChevronUp /></Collapse>
      </Ribbon>

      <Workspace>
        <LeftPane>
          <ThumbList>
            {THUMBS.map(({ n, Content, active }) => (
              <ThumbRow key={n}>
                <ThumbMeta>
                  <ThumbNumber $active={active}>{n}</ThumbNumber>
                  <StarIcon />
                </ThumbMeta>
                <ThumbFrame $active={active}>
                  <ThumbScale><Content /></ThumbScale>
                </ThumbFrame>
              </ThumbRow>
            ))}
          </ThumbList>
          <ScrollBar>
            <ScrollButton><UpTriangle $s={4} /></ScrollButton>
            <ScrollThumb $mt={0} $h={144} />
            <ScrollGap />
            <ScrollButton><DownTriangle /></ScrollButton>
            <ScrollThumb $mt={0} $h={2} style={{ visibility: "hidden" }} />
          </ScrollBar>
        </LeftPane>
        <Editor>
          <StageRow>
            <Stage>
              <SlideBorder><ImportanceSlide /></SlideBorder>
            </Stage>
            <SideColumn>
              <SideTrack>
                <ScrollButton><UpTriangle $s={4} /></ScrollButton>
                <ScrollThumb $mt={44} $h={43} />
                <ScrollGap />
                <ScrollButton><DownTriangle /></ScrollButton>
              </SideTrack>
              <PageJump>
                <JumpIcon />
                <JumpIcon down />
              </PageJump>
            </SideColumn>
          </StageRow>
          <Notes>Click to add notes</Notes>
        </Editor>
      </Workspace>

      <StatusBar>
        <StatusItem $ml={7}>Slide 2 of 17</StatusItem>
        <StatusItem $ml={20}><SpellIcon /></StatusItem>
        <StatusItem $ml={17}>English (United States)</StatusItem>
        <StatusRight>
          <StatusItem><NotesIcon />Notes</StatusItem>
          <StatusItem $ml={20}><CommentIcon />Comments</StatusItem>
          <StatusItem $ml={18} $w={38} $center $on><NormalViewIcon /></StatusItem>
          <StatusItem $w={38} $center><SorterIcon /></StatusItem>
          <StatusItem $w={37} $center><ReadingIcon /></StatusItem>
          <StatusItem $w={38} $center><ShowIcon /></StatusItem>
          <StatusItem $ml={3}><Ico w={7} h={3}><path d="M0 1.500h7" stroke="#666" strokeWidth="2" /></Ico></StatusItem>
          <ZoomTrack><ZoomHandle /></ZoomTrack>
          <StatusItem $ml={3}><Ico w={9} h={9}><path d="M0 4.500h9M4.500 0v9" stroke="#666" strokeWidth="2" /></Ico></StatusItem>
          <StatusItem $ml={12}>109%</StatusItem>
          <StatusItem $ml={15}><FitIcon /></StatusItem>
          <StatusItem $w={6} />
        </StatusRight>
      </StatusBar>
    </Page>
  );
}
